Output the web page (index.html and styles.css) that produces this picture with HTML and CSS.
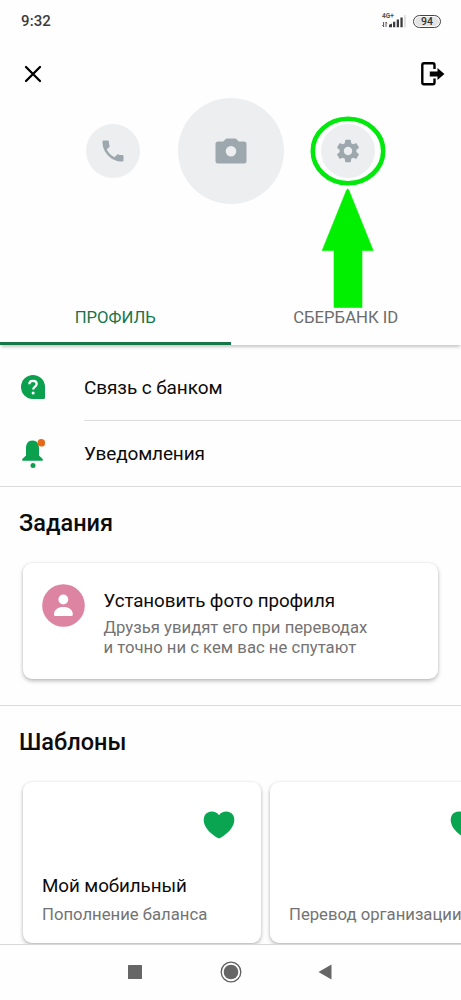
FILE: index.html
```html
<!DOCTYPE html>
<html lang="ru">
<head>
<meta charset="utf-8">
<meta name="viewport" content="width=device-width, initial-scale=1">
<title>Профиль</title>
<link rel="stylesheet" href="styles.css">
</head>
<body>
<div class="screen">
  <header class="status">
    <span class="clock">9:32</span>
    <div class="indicators">
      <div class="network">
        <span class="net-type">4G+</span>
        <svg class="signal" width="24" height="13" viewBox="0 0 24 13">
          <path d="M1.600 7v5M.4 10.200l1.200 1.600M4 12V7l1 1.400" fill="none" stroke="#555" stroke-width="1"/>
          <path d="M7 12.300v-2.600l3-1.200v3.800zM11 6.800h2.300v5.500H11zM14.700 4.600H17v7.700h-2.300zM18.400 2.400h2.300v9.900h-2.300z" fill="#3c3c3c"/>
          <path d="M22.300 0h1.300v12.300h-1.300z" fill="#d0d0d0"/>
        </svg>
      </div>
      <span class="battery">94</span>
    </div>
  </header>

  <div class="toolbar">
    <svg width="18" height="18" viewBox="0 0 18 18"><path d="M2 2l14 14M16 2L2 16" stroke="#000" stroke-width="2.300" stroke-linecap="round"/></svg>
    <svg width="25" height="26" viewBox="0 0 25 26">
      <path d="M14.500 8V4Q14.500 2.300 12.800 2.300H4Q2.300 2.300 2.300 4V21.600Q2.300 23.300 4 23.300H12.800Q14.500 23.300 14.500 21.600V17.500" fill="none" stroke="#000" stroke-width="2.400"/>
      <path d="M9.800 10.600H17.500V7l6.900 6-6.900 6v-3.600H9.800z" fill="#000"/>
    </svg>
  </div>

  <div class="actions">
    <div class="circle"><svg width="28" height="28" viewBox="0 0 24 24"><path fill="#9da7ae" d="M6.620 10.790c1.440 2.830 3.760 5.140 6.590 6.590l2.200-2.200c.27-.27.67-.36 1.020-.24 1.120.37 2.330.57 3.570.57.55 0 1 .45 1 1V20c0 .55-.45 1-1 1-9.390 0-17-7.610-17-17 0-.55.45-1 1-1h3.500c.55 0 1 .45 1 1 0 1.250.2 2.450.57 3.570.11.35.03.74-.25 1.020l-2.200 2.200z"/></svg></div>
    <div class="circle photo"><svg width="32" height="26" viewBox="0 0 32 26"><path fill="#9da7ae" fill-rule="evenodd" d="M3 3.400h5.200l2-2Q11 .5 12.300.5h7.400q1.300 0 2.100.9l2 2H29Q31.500 3.400 31.500 6v17q0 2.500-2.500 2.500H3Q.5 25.500.5 23V6Q.5 3.400 3 3.400zM16 8a5.300 5.300 0 1 0 0 10.600A5.300 5.300 0 1 0 16 8z"/></svg></div>
    <div class="circle settings">
      <svg width="28" height="28" viewBox="0 0 24 24"><path fill="#9da7ae" d="M19.140 12.940c.04-.3.06-.61.06-.94 0-.32-.02-.64-.07-.94l2.030-1.580c.18-.14.23-.41.12-.61l-1.920-3.320c-.12-.22-.37-.29-.59-.22l-2.390.96c-.5-.38-1.030-.7-1.620-.94l-.36-2.540c-.04-.24-.24-.41-.48-.41h-3.840c-.24 0-.43.17-.47.41l-.36 2.540c-.59.24-1.130.57-1.620.94l-2.390-.96c-.22-.08-.47 0-.59.22L2.740 8.870c-.12.21-.08.47.12.61l2.030 1.580c-.05.3-.09.63-.09.94s.02.64.07.94l-2.030 1.580c-.18.14-.23.41-.12.61l1.920 3.320c.12.22.37.29.59.22l2.390-.96c.5.38 1.030.7 1.620.94l.36 2.540c.05.24.24.41.48.41h3.840c.24 0 .44-.17.47-.41l.36-2.540c.59-.24 1.130-.56 1.620-.94l2.390.96c.22.08.47 0 .59-.22l1.920-3.320c.12-.22.07-.47-.12-.61l-2.010-1.580zM12 15.600c-1.980 0-3.600-1.620-3.600-3.600s1.620-3.600 3.600-3.600 3.600 1.620 3.600 3.600-1.620 3.600-3.600 3.600z"/></svg>
      <svg class="pointer" width="76" height="193" viewBox="0 0 76 193">
        <ellipse cx="38" cy="35" rx="35.200" ry="32.200" fill="none" stroke="#00e80c" stroke-width="4.600"/>
        <path d="M36.600 74q1.100-2 2.200 0L63.200 134.500H52V191.500H24V134.500H12.200z" fill="#00f000" stroke="#00f000" stroke-width=".6"/>
      </svg>
    </div>
  </div>

  <nav class="tabs">
    <div class="tab active"><span>ПРОФИЛЬ</span></div>
    <div class="tab"><span>СБЕРБАНК ID</span></div>
  </nav>

  <main>
    <div class="row">
      <svg width="24" height="24" viewBox="0 0 24 24">
        <path d="M12 0A12 12 0 0 1 24 12V22.500Q24 24 22.500 24H12A12 12 0 0 1 12 0z" fill="#0ba04d"/>
        <path d="M8.300 9.200C8.400 6.900 10 5.800 12 5.800c2.100 0 3.700 1.200 3.700 3.100 0 2.700-3.500 2.700-3.500 5.700" fill="none" stroke="#fff" stroke-width="2.200"/>
        <circle cx="12.100" cy="17.900" r="1.500" fill="#fff"/>
      </svg>
      <div class="label contact">Связь с банком</div>
    </div>
    <div class="row last">
      <svg width="24" height="30" viewBox="0 0 24 30">
        <path d="M11.500 2.500C7 2.500 5 6 5 10v7.500L1.300 21q-.9 1.800.7 1.800h19q1.600 0 .7-1.800L18 17.500V10c0-4-2-7.500-6.500-7.500z" fill="#0ba04d"/>
        <circle cx="12" cy="27.400" r="2.500" fill="#0ba04d"/>
        <circle cx="20.300" cy="4.800" r="3.800" fill="#e8681a"/>
      </svg>
      <div class="label notify">Уведомления</div>
    </div>

    <section class="tasks">
      <h2>Задания</h2>
      <article class="card task">
        <svg width="43" height="43" viewBox="0 0 43 43"><circle cx="21.500" cy="21.500" r="21.300" fill="#dd84a2"/><circle cx="21.300" cy="15.500" r="4.900" fill="#fff"/><path d="M12 30.500C12 25.500 16 23 21.400 23s9.400 2.500 9.400 7.500q0 1.500-1.500 1.500H13.500Q12 32 12 30.500z" fill="#fff"/></svg>
        <div>
          <h3>Установить фото профиля</h3>
          <p>Друзья увидят его при переводах<br>и точно ни с кем вас не спутают</p>
        </div>
      </article>
    </section>

    <section class="templates">
      <h2>Шаблоны</h2>
      <div class="carousel">
        <article class="card template">
          <svg width="32" height="28" viewBox="0 0 32 28"><path d="M16 4.200C19-.5 27-.8 30.200 4.200 34 12 27.500 21 17.200 26.900q-1.200.7-2.400 0C4.500 21-2 12 1.800 4.200 5-.8 13-.5 16 4.200z" fill="#0aa550"/></svg>
          <h3>Мой мобильный</h3>
          <p>Пополнение баланса</p>
        </article>
        <article class="card template">
          <svg width="32" height="28" viewBox="0 0 32 28"><path d="M16 4.200C19-.5 27-.8 30.200 4.200 34 12 27.500 21 17.200 26.900q-1.200.7-2.400 0C4.500 21-2 12 1.800 4.200 5-.8 13-.5 16 4.200z" fill="#0aa550"/></svg>
          <p>Перевод организации</p>
        </article>
      </div>
    </section>
  </main>

  <footer class="navbar">
    <svg width="14" height="14" viewBox="0 0 14 14"><rect width="14" height="14" rx=".5" fill="#666"/></svg>
    <svg width="22" height="22" viewBox="0 0 22 22"><circle cx="11" cy="11" r="9.800" fill="none" stroke="#5c5c5c" stroke-width="1.300"/><circle cx="11" cy="11" r="7.300" fill="#666"/></svg>
    <svg width="14" height="16" viewBox="0 0 14 16"><path d="M.5 8L13.500.5v15z" fill="#666"/></svg>
  </footer>
</div>
</body>
</html>
```
FILE: styles.css
```css
* { box-sizing: border-box; }
body { margin: 0; background: #fefefe; font-family: Roboto, "Open Sans", sans-serif; color: #0c0c0c; }
svg { display: block; flex: none; }
h2, h3, p { margin: 0; }
.screen { width: 461px; height: 1000px; overflow: hidden; display: flex; flex-direction: column; }
.status { height: 42px; padding: 0 20px 0 21px; display: flex; justify-content: space-between; align-items: center; }
.clock { font-size: 15px; font-weight: 500; letter-spacing: .1px; color: #3c3c3c; }
.indicators { display: flex; align-items: center; gap: 7px; }
.network { width: 24px; height: 15px; position: relative; }
.net-type { position: absolute; left: 0; top: -1px; font-size: 6.5px; line-height: 7px; font-weight: 700; color: #555; }
.signal { margin-top: 1px; }
.battery { width: 28px; height: 13px; border: 1px solid #444; border-radius: 7px; background: #e4e4e4; box-shadow: inset 0 0 0 1px #fff; font-size: 10.5px; line-height: 11.5px; font-weight: 500; text-align: center; color: #333; }
.toolbar { height: 55px; padding: 19px 16px 0 24px; display: flex; justify-content: space-between; align-items: flex-start; }
.toolbar svg:first-child { margin-top: 4px; }
.actions { height: 107px; padding-left: 86px; display: flex; align-items: center; gap: 37.500px; }
.circle { width: 54px; height: 54px; border-radius: 50%; background: #eceef0; display: flex; align-items: center; justify-content: center; }
.photo { width: 106px; height: 106px; }
.settings { position: relative; margin-left: -.5px; }
.pointer { position: absolute; left: -10.500px; top: -7.500px; z-index: 2; }
.tabs { height: 57px; margin-top: 84px; display: flex; box-shadow: 0 3px 3px -1px rgba(0,0,0,.22); flex: none; }
.tab { flex: 1; height: 57px; text-align: center; font-size: 16.7px; line-height: 59px; color: #6c6c6c; }
.active { color: #16764a; border-bottom: 3px solid #16764a; }
main { flex: 1; min-height: 0; overflow: hidden; padding-top: 10px; }
.row { display: flex; align-items: center; height: 66px; padding-left: 21px; gap: 39px; }
.row svg { margin-bottom: 2px; }
.label { flex: 1; height: 66px; line-height: 66px; font-size: 19px; border-bottom: 1px solid #dcdcdc; }
.contact { letter-spacing: -.1px; }
.notify { letter-spacing: -.15px; }
.last { border-bottom: 1px solid #dcdcdc; }
.last .label { border: 0; }
h2 { font-size: 23.5px; line-height: 30px; font-weight: 500; padding-left: 19px; }
h3 { font-size: 18.8px; line-height: 24px; font-weight: 400; letter-spacing: -.07px; }
p { font-size: 16.700px; line-height: 20px; color: #737373; }
h2, h3, p, span { white-space: nowrap; }
.card { background: #fff; border-radius: 9px; box-shadow: 0 2px 4px rgba(0,0,0,.27), 0 0 2px rgba(0,0,0,.08); }
.tasks { height: 219px; padding-top: 21px; border-bottom: 1px solid #dcdcdc; }
.task { margin: 25px 23px 0; height: 116px; padding: 21px 0 0 19px; display: flex; gap: 18.500px; }
.task h3 { margin-top: 5px; }
.task p { margin-top: 5px; }
.templates { padding-top: 21px; }
.carousel { display: flex; gap: 9px; padding: 25px 0 0 23px; }
.template { flex: none; width: 238px; height: 161px; padding: 29px 26px 18px 19px; display: flex; flex-direction: column; }
.template svg { align-self: flex-end; margin-bottom: auto; }
.template p { margin-top: 7px; }
.navbar { position: relative; height: 56px; border-top: 1px solid #d8d8d8; display: flex; align-items: center; padding: 0 0 2px 128px; background: #fefefe; flex: none; }
.navbar svg:nth-child(2) { margin: 0 76px 0 77.500px; }
```
